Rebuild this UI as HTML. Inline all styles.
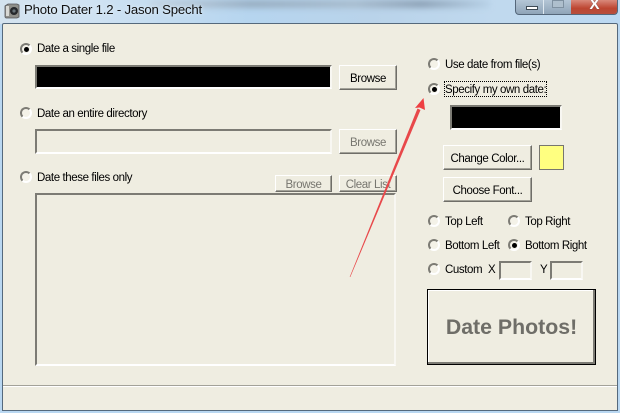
<!DOCTYPE html>
<html><head><meta charset="utf-8">
<style>
html,body{margin:0;padding:0;width:620px;height:413px;overflow:hidden}
body{position:relative;font-family:"Liberation Sans",sans-serif;font-size:11.5px;letter-spacing:-.4px;color:#000;background:#b9d7f1}
.a{position:absolute;box-sizing:border-box}
.t{position:absolute;white-space:nowrap;line-height:14px;height:14px}
.in{position:absolute;box-sizing:border-box;border:2px solid;border-color:#7c7b74 #f8f7f2 #fff #7c7b74}
.btn{position:absolute;box-sizing:border-box;background:#efede1;border:1px solid;border-color:#fff #6f6e68 #6f6e68 #fff;box-shadow:inset -1px -1px 0 #a3a299;text-align:center;white-space:nowrap;overflow:hidden}
.dis{color:#77766f}
.r{position:absolute;width:12px;height:12px;border-radius:50%;box-sizing:border-box;background:#f4f2e8;border:2px solid #fff;border-left-color:#7c7b74;border-top-color:#7c7b74}
.r.on:after{content:"";position:absolute;left:2px;top:2px;width:5px;height:5px;border-radius:50%;background:#000}
</style></head><body>
<div class="a" style="left:0;top:0;width:620px;height:24px;background:linear-gradient(90deg,#d4e3ef 0,#cfe2f2 15%,#b6d5ef 40%,#b9d3ea 60%,#c0d9ee 80%,#bcd9f2 100%)"></div>
<div class="a" style="left:150px;top:0;width:340px;height:8px;background:linear-gradient(90deg,#c4d4e2,#8fa2b4 30%,#a3b6c6 60%,#7f92a6 80%,#b6d0e6);filter:blur(3px);opacity:.75"></div>
<svg class="a" style="left:3px;top:2px" width="17" height="17" viewBox="0 0 17 17"><path d="M2 4l3-2h9l2 1v12l-2 1H3l-1-1z" fill="#8f8f8a" stroke="#55565a" stroke-width=".8"/><rect x="3" y="4" width="3" height="10" fill="#d8d8d4"/><circle cx="11" cy="9" r="4" fill="#26282c"/><circle cx="11" cy="9" r="1.6" fill="#69747a"/></svg>
<div class="t" style="left:24px;top:1px;font-size:13.2px;letter-spacing:-.2px;line-height:17px;height:17px;color:#111;text-shadow:0 0 4px #e8f2fa">Photo Dater 1.2 - Jason Specht</div>

<div class="a" style="left:515px;top:0;width:103px;height:15px;border:1px solid #55677a;border-top:0;border-radius:0 0 4px 4px;overflow:hidden;background:linear-gradient(#b4c6d6,#8fa4b8)">
<div class="a" style="left:27px;top:0;width:1px;height:15px;background:#dfe9f1"></div>
<div class="a" style="left:10px;top:6px;width:12px;height:4px;background:#fff;border:1px solid #3e4a55"></div>
<div class="a" style="left:36px;top:0;width:12px;height:8px;border:1px solid #7f91a1;background:#aebfcd"></div>
<div class="a" style="left:55px;top:0;width:47px;height:15px;background:linear-gradient(#d9897b,#bd4632 55%,#b5503f)"></div>
<div class="t" style="left:55px;top:-3px;width:47px;text-align:center;font:bold 15px/15px 'Liberation Sans',sans-serif;letter-spacing:0;color:#fff;text-shadow:0 0 1px #555">X</div>
</div>

<div class="a" style="left:2px;top:23px;width:616px;height:388px;background:#efede1;border:1px solid #55697c;border-radius:2px 2px 0 0"></div>
<div class="a" style="left:3px;top:385px;width:614px;height:1px;background:#a3a299"></div>
<div class="a" style="left:3px;top:386px;width:614px;height:1px;background:#fff"></div>

<div class="r on" style="left:20px;top:43px"></div>
<div class="t" style="left:37px;top:42px">Date a single file</div>
<div class="in" style="left:35px;top:65px;width:297px;height:24px;background:#000"></div>
<div class="btn" style="left:339px;top:65px;width:58px;height:25px;line-height:26px">Browse</div>

<div class="r" style="left:20px;top:107px"></div>
<div class="t" style="left:37px;top:107px">Date an entire directory</div>
<div class="in" style="left:35px;top:129px;width:297px;height:25px;background:#efede1"></div>
<div class="btn dis" style="left:339px;top:129px;width:58px;height:25px;line-height:26px">Browse</div>

<div class="r" style="left:20px;top:171px"></div>
<div class="t" style="left:37px;top:171px">Date these files only</div>
<div class="btn dis" style="left:275px;top:175px;width:57px;height:17px;line-height:18px">Browse</div>
<div class="btn dis" style="left:339px;top:175px;width:58px;height:17px;line-height:18px">Clear List</div>
<div class="in" style="left:35px;top:193px;width:361px;height:173px;background:#efede1"></div>

<div class="r" style="left:428px;top:58px"></div>
<div class="t" style="left:445px;top:58px">Use date from file(s)</div>
<div class="r on" style="left:428px;top:83px"></div>
<div class="a" style="left:444px;top:81px;width:103px;height:16px;border:1px dotted #000"></div>
<div class="t" style="left:445px;top:83px">Specify my own date:</div>
<div class="in" style="left:450px;top:105px;width:112px;height:25px;background:#000"></div>
<div class="btn" style="left:443px;top:145px;width:89px;height:25px;line-height:26px">Change Color...</div>
<div class="a" style="left:539px;top:145px;width:25px;height:25px;background:#ffff80;border:1px solid #77766f"></div>
<div class="btn" style="left:443px;top:177px;width:89px;height:25px;line-height:26px">Choose Font...</div>

<div class="r" style="left:428px;top:215px"></div>
<div class="t" style="left:445px;top:215px">Top Left</div>
<div class="r" style="left:508px;top:215px"></div>
<div class="t" style="left:525px;top:215px">Top Right</div>
<div class="r" style="left:428px;top:239px"></div>
<div class="t" style="left:445px;top:239px">Bottom Left</div>
<div class="r on" style="left:508px;top:239px"></div>
<div class="t" style="left:525px;top:239px">Bottom Right</div>
<div class="r" style="left:428px;top:263px"></div>
<div class="t" style="left:445px;top:263px">Custom</div>
<div class="t" style="left:488px;top:263px">X</div>
<div class="in" style="left:499px;top:261px;width:33px;height:19px;background:#efede1"></div>
<div class="t" style="left:540px;top:263px">Y</div>
<div class="in" style="left:550px;top:261px;width:33px;height:19px;background:#efede1"></div>

<div class="btn" style="left:427px;top:289px;width:169px;height:76px;border:1px solid #000;box-shadow:inset -2px -2px 0 #7c7b74,inset 1px 1px 0 #fff;font:bold 21.3px/75px 'Liberation Sans',sans-serif;letter-spacing:0;color:#6f6e68">Date Photos!</div>

<svg class="a" style="left:0;top:0;pointer-events:none" width="620" height="413" viewBox="0 0 620 413">
<path d="M349.7 277L350.3 277 420.5 110 417.5 108.5z" fill="#e8484a"/>
<path d="M423.5 98L425 110 419.5 107.5 415 108z" fill="#ee3f42"/>
</svg>
</body></html>
